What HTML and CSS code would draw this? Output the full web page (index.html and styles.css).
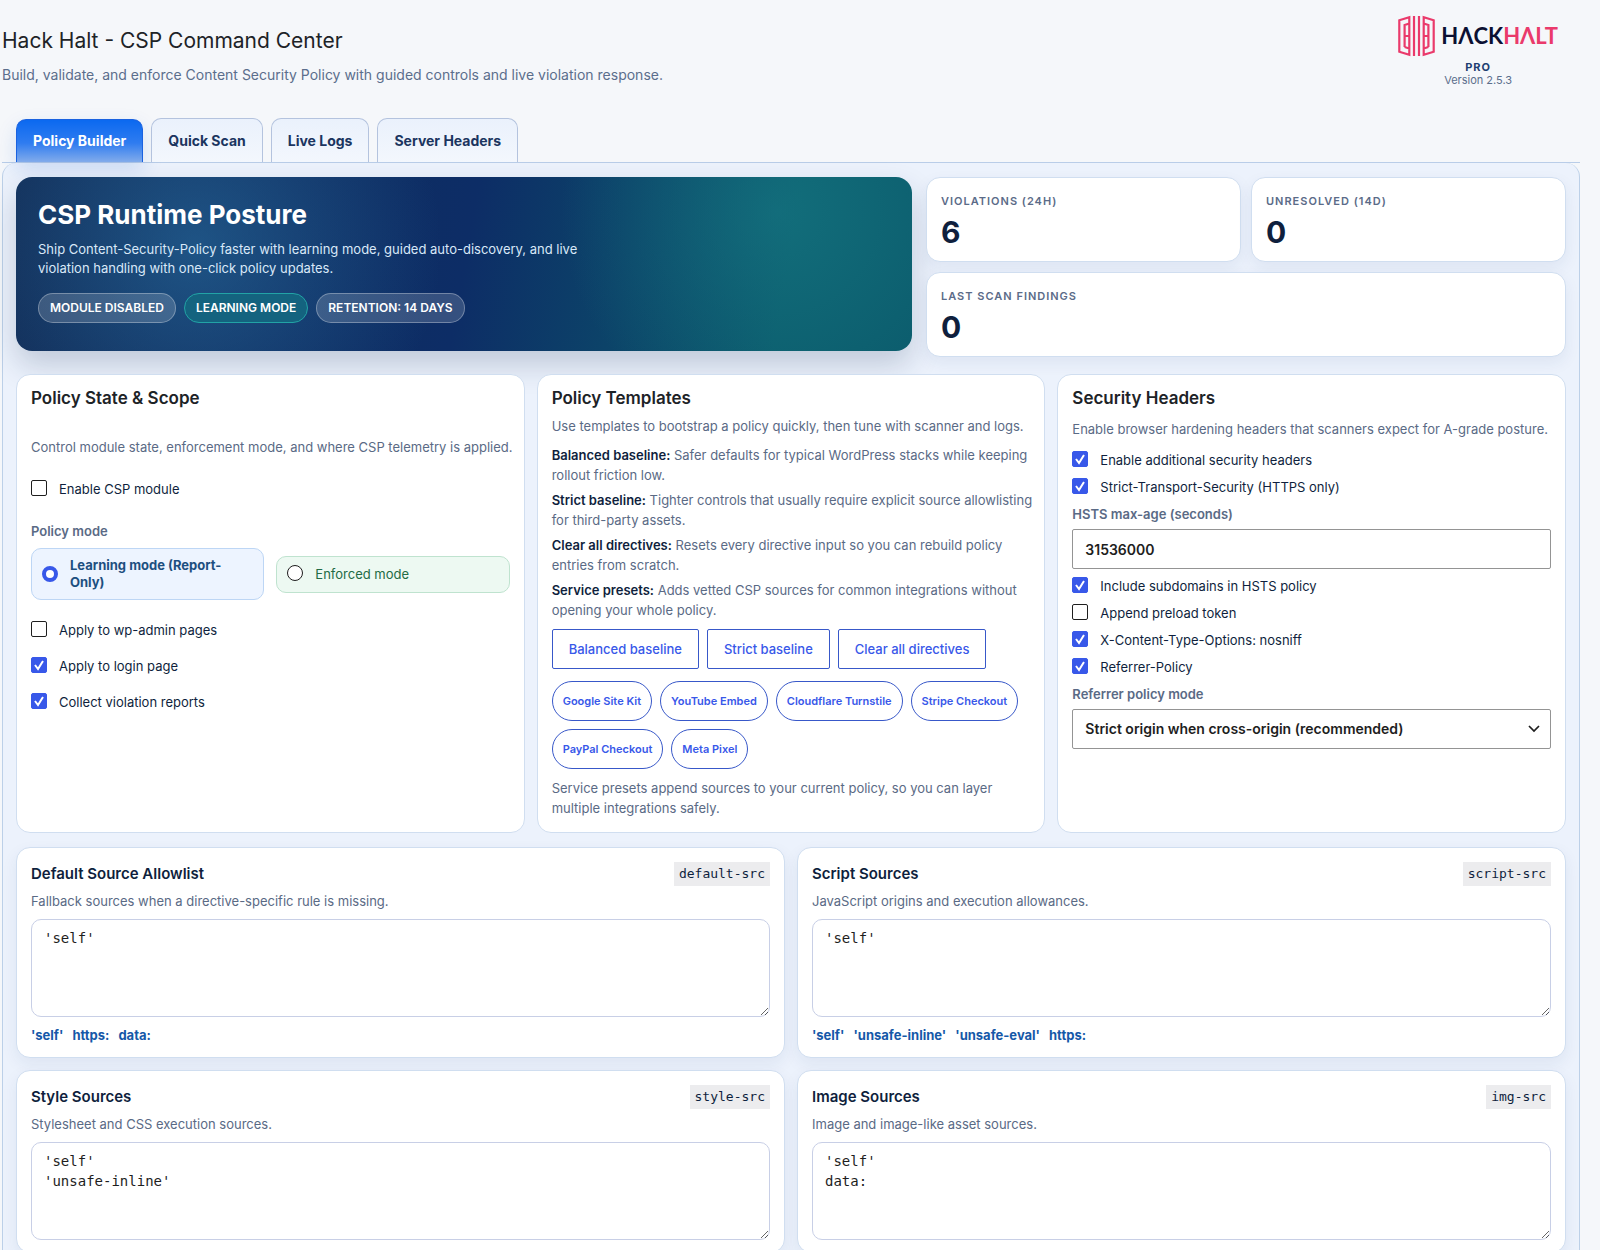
FILE: index.html
```html
<!DOCTYPE html>
<html lang="en">
<head>
    <meta charset="UTF-8">
    <meta name="viewport" content="width=device-width, initial-scale=1.0">
    <title>Hack Halt - CSP Command Center</title>
    <link rel="stylesheet" href="styles.css">
</head>
<body>
    <div class="wrap">
        <header class="page-header">
            <div>
                <h1>Hack Halt - CSP Command Center</h1>
                <p class="subtitle">Build, validate, and enforce Content Security Policy with guided controls and live violation response.</p>
            </div>
            <div class="brand">
                <div class="brand-logo">
                    <svg class="brand-mark" viewBox="0 0 37 42" fill="none" stroke="#ea3a6b" stroke-width="2.2">
                        <path d="M11.300 15V2.200L1.300 5.200V36.800L11.300 39.800V27M6.600 32V10L11.300 8.500M6.600 32L11.300 33.500M6.600 21H11.300M11.300 15V27"/>
                        <path d="M16 1V41M21 1V41"/>
                        <path d="M25.700 15V2.200L35.700 5.200V36.800L25.700 39.800V27M30.400 32V10L25.700 8.500M30.400 32L25.700 33.500M30.400 21H25.700M25.700 15V27"/>
                    </svg>
                    <span class="brand-name">H&Lambda;CK<span>H&Lambda;LT</span></span>
                </div>
                <span class="brand-plan">PRO</span>
                <span class="brand-version">Version 2.5.3</span>
            </div>
        </header>

        <nav class="tabs">
            <a href="#builder" class="tab active">Policy Builder</a>
            <a href="#scan" class="tab">Quick Scan</a>
            <a href="#logs" class="tab">Live Logs</a>
            <a href="#headers" class="tab">Server Headers</a>
        </nav>

        <main class="panel" id="builder">
            <section class="top">
                <div class="hero">
                    <h2>CSP Runtime Posture</h2>
                    <p>Ship Content-Security-Policy faster with learning mode, guided auto-discovery, and live violation handling with one-click policy updates.</p>
                    <div class="badges">
                        <span class="badge">MODULE DISABLED</span>
                        <span class="badge learning">LEARNING MODE</span>
                        <span class="badge">RETENTION: 14 DAYS</span>
                    </div>
                </div>
                <div class="stats">
                    <div class="stat">
                        <span class="stat-label">VIOLATIONS (24H)</span>
                        <strong>6</strong>
                    </div>
                    <div class="stat">
                        <span class="stat-label">UNRESOLVED (14D)</span>
                        <strong>0</strong>
                    </div>
                    <div class="stat wide">
                        <span class="stat-label">LAST SCAN FINDINGS</span>
                        <strong>0</strong>
                    </div>
                </div>
            </section>

            <form class="forms">
                <div class="cards">
                    <section class="card">
                        <h3>Policy State &amp; Scope</h3>
                        <div class="scope">
                            <p class="hint">Control module state, enforcement mode, and where CSP telemetry is applied.</p>
                            <label class="check enable"><input type="checkbox" name="enabled"> Enable CSP module</label>
                            <fieldset class="modes">
                                <legend class="field-label">Policy mode</legend>
                                <div class="mode-list">
                                    <label class="check mode report"><input type="radio" name="mode" value="report" checked> Learning mode (Report-Only)</label>
                                    <label class="check mode enforce"><input type="radio" name="mode" value="enforce"> Enforced mode</label>
                                </div>
                            </fieldset>
                            <label class="check"><input type="checkbox" name="wp_admin"> Apply to wp-admin pages</label>
                            <label class="check"><input type="checkbox" name="login" checked> Apply to login page</label>
                            <label class="check"><input type="checkbox" name="reports" checked> Collect violation reports</label>
                        </div>
                    </section>

                    <section class="card">
                        <h3>Policy Templates</h3>
                        <div class="templates">
                            <p class="hint intro">Use templates to bootstrap a policy quickly, then tune with scanner and logs.</p>
                            <p class="hint"><strong>Balanced baseline:</strong> Safer defaults for typical WordPress stacks while keeping rollout friction low.</p>
                            <p class="hint"><strong>Strict baseline:</strong> Tighter controls that usually require explicit source allowlisting for third-party assets.</p>
                            <p class="hint"><strong>Clear all directives:</strong> Resets every directive input so you can rebuild policy entries from scratch.</p>
                            <p class="hint"><strong>Service presets:</strong> Adds vetted CSP sources for common integrations without opening your whole policy.</p>
                        </div>
                        <div class="buttons">
                            <button type="button" class="btn">Balanced baseline</button>
                            <button type="button" class="btn">Strict baseline</button>
                            <button type="button" class="btn">Clear all directives</button>
                        </div>
                        <div class="buttons presets">
                            <button type="button" class="btn pill">Google Site Kit</button>
                            <button type="button" class="btn pill">YouTube Embed</button>
                            <button type="button" class="btn pill">Cloudflare Turnstile</button>
                            <button type="button" class="btn pill">Stripe Checkout</button>
                            <button type="button" class="btn pill">PayPal Checkout</button>
                            <button type="button" class="btn pill">Meta Pixel</button>
                        </div>
                        <p class="hint">Service presets append sources to your current policy, so you can layer multiple integrations safely.</p>
                    </section>

                    <section class="card">
                        <h3>Security Headers</h3>
                        <div class="security">
                            <p class="hint">Enable browser hardening headers that scanners expect for A-grade posture.</p>
                            <label class="check"><input type="checkbox" name="extra" checked> Enable additional security headers</label>
                            <label class="check"><input type="checkbox" name="hsts" checked> Strict-Transport-Security (HTTPS only)</label>
                            <div class="field">
                                <label class="field-label" for="max-age">HSTS max-age (seconds)</label>
                                <input class="text-input" type="text" id="max-age" value="31536000">
                            </div>
                            <label class="check"><input type="checkbox" name="subdomains" checked> Include subdomains in HSTS policy</label>
                            <label class="check"><input type="checkbox" name="preload"> Append preload token</label>
                            <label class="check"><input type="checkbox" name="nosniff" checked> X-Content-Type-Options: nosniff</label>
                            <label class="check"><input type="checkbox" name="referrer" checked> Referrer-Policy</label>
                            <div class="field">
                                <label class="field-label" for="referrer-mode">Referrer policy mode</label>
                                <div class="select">
                                    <select class="text-input" id="referrer-mode">
                                        <option>Strict origin when cross-origin (recommended)</option>
                                    </select>
                                    <svg viewBox="0 0 12 8" fill="none" stroke="#1e1e1e" stroke-width="1.700"><path d="M1 1L6 6L11 1"/></svg>
                                </div>
                            </div>
                        </div>
                    </section>
                </div>

                <div class="directives">
                    <section class="directive">
                        <div class="directive-head">
                            <label for="default-src">Default Source Allowlist</label>
                            <code>default-src</code>
                        </div>
                        <p class="hint">Fallback sources when a directive-specific rule is missing.</p>
                        <textarea id="default-src">'self'</textarea>
                        <div class="tokens">
                            <a href="#default-src">'self'</a>
                            <a href="#default-src">https:</a>
                            <a href="#default-src">data:</a>
                        </div>
                    </section>
                    <section class="directive">
                        <div class="directive-head">
                            <label for="script-src">Script Sources</label>
                            <code>script-src</code>
                        </div>
                        <p class="hint">JavaScript origins and execution allowances.</p>
                        <textarea id="script-src">'self'</textarea>
                        <div class="tokens">
                            <a href="#script-src">'self'</a>
                            <a href="#script-src">'unsafe-inline'</a>
                            <a href="#script-src">'unsafe-eval'</a>
                            <a href="#script-src">https:</a>
                        </div>
                    </section>
                    <section class="directive">
                        <div class="directive-head">
                            <label for="style-src">Style Sources</label>
                            <code>style-src</code>
                        </div>
                        <p class="hint">Stylesheet and CSS execution sources.</p>
                        <textarea id="style-src">'self'
'unsafe-inline'</textarea>
                    </section>
                    <section class="directive">
                        <div class="directive-head">
                            <label for="img-src">Image Sources</label>
                            <code>img-src</code>
                        </div>
                        <p class="hint">Image and image-like asset sources.</p>
                        <textarea id="img-src">'self'
data:</textarea>
                    </section>
                </div>
            </form>
        </main>
    </div>
</body>
</html>
```
FILE: styles.css
```css
* {
    box-sizing: border-box;
}
body {
    margin: 0;
    background: #f5f7fa;
    color: #0f1f3d;
    font-family: Inter, "Liberation Sans", sans-serif;
    font-size: 13px;
    line-height: 20px;
}
h1, h2, h3, p {
    margin: 0;
}
.wrap {
    padding: 0 20px 0 2px;
}

/* header */
.page-header {
    display: flex;
    justify-content: space-between;
    height: 118px;
}
h1 {
    padding-top: 26px;
    font-size: 21px;
    font-weight: 400;
    line-height: 30px;
    color: #1d2327;
}
.subtitle {
    margin-top: 9px;
    font-size: 14px;
    color: #5b6e8c;
}
.brand {
    display: flex;
    flex-direction: column;
    align-items: center;
    padding: 15px 22px 0 0;
}
.brand-logo {
    display: flex;
    align-items: center;
    gap: 6px;
}
.brand-mark {
    width: 37px;
    height: 42px;
}
.brand-name {
    font-family: Lato, sans-serif;
    font-size: 22px;
    font-weight: 700;
    color: #0b1033;
}
.brand-name span {
    color: #ea3a6b;
}
.brand-plan {
    margin-top: 3px;
    font-size: 11px;
    font-weight: 700;
    line-height: 14px;
    letter-spacing: 1px;
    color: #1d3f72;
}
.brand-version {
    font-size: 11px;
    line-height: 12px;
    color: #5b6e8c;
}

/* tabs */
.tabs {
    display: flex;
    gap: 8px;
    height: 45px;
    padding-left: 14px;
    border-bottom: 1px solid #b9cde8;
}
.tab {
    padding: 12px 16px;
    border: 1px solid #b4c3de;
    border-bottom: 0;
    border-radius: 10px 10px 0 0;
    background: linear-gradient(#eaf1fc, #f3f7fd);
    color: #1b3560;
    font-size: 14px;
    font-weight: 700;
    text-decoration: none;
}
.tab.active {
    margin-top: 1px;
    padding-top: 11px;
    border-color: #1a62e0;
    background: linear-gradient(#0b69f0, #2f7cf0 55%, #82abeb);
    box-shadow: 0 8px 20px rgba(20, 90, 200, 0.15);
    color: #fff;
}

/* main panel */
.panel {
    padding: 14px 13px;
    border: 1px solid #bcd0e8;
    border-top: 0;
    border-radius: 14px 14px 0 0;
    background: #ecf2fc;
}
.top {
    display: grid;
    grid-template-columns: 7fr 5fr;
    gap: 14px;
    align-items: start;
}
.hero {
    padding: 22px 22px 28px;
    border-radius: 16px;
    background:
        radial-gradient(circle at 85% 20%, rgba(24, 125, 135, 0.55), transparent 28%),
        radial-gradient(circle at 20% 40%, rgba(40, 110, 160, 0.6), transparent 34%),
        linear-gradient(100deg, #122c56, #0d2d66 50%, #0b5b6c 85%);
    box-shadow: 0 14px 30px rgba(15, 40, 80, 0.2);
    color: #fff;
}
.hero h2 {
    font-size: 26px;
    font-weight: 700;
    line-height: 32px;
}
.hero p {
    max-width: 560px;
    margin: 9px 0 15px;
    line-height: 19px;
    color: #d9e8f8;
}
.badges {
    display: flex;
    gap: 8px;
}
.badge {
    padding: 5px 11px;
    border: 1px solid rgba(255, 255, 255, 0.3);
    border-radius: 15px;
    background: rgba(255, 255, 255, 0.17);
    font-size: 12px;
    font-weight: 600;
    line-height: 18px;
}
.badge.learning {
    border-color: #22a3a6;
    background: #14637f;
}
.stats {
    display: grid;
    grid-template-columns: 1fr 1fr;
    gap: 10px;
}
.stat {
    display: flex;
    flex-direction: column;
    height: 85px;
    padding: 14px;
    border: 1px solid #d0def0;
    border-radius: 14px;
    background: #fff;
    box-shadow: 0 6px 16px rgba(30, 60, 110, 0.07);
}
.stat.wide {
    grid-column: span 2;
}
.stat-label {
    font-size: 11px;
    font-weight: 600;
    line-height: 18px;
    letter-spacing: 1px;
    color: #5b6b88;
}
.stat strong {
    margin-top: 6px;
    font-size: 30px;
    font-weight: 700;
    line-height: 32px;
}

/* settings cards */
.cards {
    display: grid;
    grid-template-columns: repeat(3, minmax(0, 1fr));
    gap: 12px;
    margin-top: 17px;
}
.card {
    display: flex;
    flex-direction: column;
    gap: 9px;
    padding: 14px;
    border: 1px solid #d0def0;
    border-radius: 14px;
    background: #fff;
}
.card h3 {
    font-size: 17px;
    font-weight: 600;
    line-height: 18px;
    color: #1d2327;
}
.hint {
    color: #5a6a85;
}
.hint strong {
    font-weight: 600;
    color: #0f1f3d;
}
.card .hint {
    margin-right: -8px;
}
.check {
    display: flex;
    align-items: flex-start;
    gap: 12px;
    line-height: 19px;
}
.check input {
    appearance: none;
    flex: none;
    width: 16px;
    height: 16px;
    margin: 0;
    border: 1px solid #1e1e1e;
    border-radius: 2px;
    background: #fff;
}
.check input[type="checkbox"]:checked {
    border-color: #3858e9;
    background: #3858e9 url("data:image/svg+xml,%3Csvg xmlns='http://www.w3.org/2000/svg' viewBox='0 0 14 14'%3E%3Cpath d='M3 7l3 4 5-8' fill='none' stroke='white' stroke-width='2'/%3E%3C/svg%3E") center / 14px no-repeat;
}
.check input[type="radio"] {
    border-radius: 50%;
}
.check input[type="radio"]:checked {
    border: 4px solid #3858e9;
}
.scope {
    display: flex;
    flex-direction: column;
    gap: 17px;
    padding-top: 21px;
}
.enable {
    padding: 6px 0;
}
.modes {
    min-width: 0;
    margin: 0 0 4px;
    padding: 0;
    border: 0;
}
.field-label {
    display: block;
    padding: 0;
    font-weight: 600;
    line-height: 18px;
    color: #5a6a85;
}
.mode-list {
    display: grid;
    grid-template-columns: 1fr 1fr;
    gap: 12px;
    align-items: center;
    margin-top: 8px;
}
.mode {
    padding: 8px 10px;
    border: 1px solid #bdd6f5;
    border-radius: 10px;
    background: #edf4ff;
    color: #1d4f80;
}
.mode.enforce {
    border-color: #bfe3cf;
    background: #edf9f2;
    color: #226b45;
}
.mode.report {
    align-items: center;
    font-weight: 700;
    line-height: 17px;
}
.templates {
    display: flex;
    flex-direction: column;
    gap: 5px;
}
.intro {
    margin-bottom: 4px;
}
.buttons {
    display: flex;
    flex-wrap: wrap;
    gap: 8px;
}
.presets {
    margin-top: 3px;
}
.btn {
    height: 40px;
    padding: 0 16px;
    border: 1px solid #3858c9;
    border-radius: 2px;
    background: #fff;
    color: #3858e9;
    font: 500 13px/20px Inter, sans-serif;
    cursor: pointer;
}
.btn.pill {
    padding: 0 10px;
    border-radius: 20px;
    font-size: 11px;
    font-weight: 600;
}
.btn:hover {
    background: #edf4ff;
}
.security {
    display: flex;
    flex-direction: column;
    gap: 8px;
    padding-top: 3px;
}
.security .hint {
    margin-bottom: 4px;
}
.field {
    display: flex;
    flex-direction: column;
    gap: 6px;
}
.text-input {
    width: 100%;
    height: 40px;
    padding: 0 12px;
    border: 1px solid #949494;
    border-radius: 2px;
    appearance: none;
    background: #fff;
    color: #1e1e1e;
    font: 600 14px/20px Inter, sans-serif;
}
.select {
    display: grid;
    align-items: center;
}
.select select, .select svg {
    grid-area: 1 / 1;
}
.select svg {
    justify-self: end;
    width: 12px;
    height: 8px;
    margin-right: 11px;
    pointer-events: none;
}

/* directive editors */
.directives {
    display: grid;
    grid-template-columns: 1fr 1fr;
    gap: 12px;
    margin-top: 14px;
}
.directive {
    padding: 14px 14px 12px;
    border: 1px solid #d0def0;
    border-radius: 14px;
    background: #fff;
    box-shadow: 0 6px 16px rgba(30, 60, 110, 0.07);
}
.directive-head {
    display: flex;
    justify-content: space-between;
    align-items: center;
    height: 24px;
    font-size: 15px;
    font-weight: 600;
}
code {
    padding: 2px 5px;
    background: #ececee;
    font: 13px/20px "DejaVu Sans Mono", monospace;
}
.directive .hint {
    margin: 5px 0 8px;
}
textarea {
    display: block;
    width: 100%;
    height: 98px;
    padding: 8px 12px;
    border: 1px solid #c8cfe6;
    border-radius: 10px;
    color: #1e1e1e;
    font: 14px/20px "DejaVu Sans Mono", monospace;
    resize: vertical;
}
.tokens {
    display: flex;
    gap: 9px;
    margin-top: 8px;
}
.tokens a {
    color: #1558a8;
    font-weight: 700;
    text-decoration: none;
}
```
